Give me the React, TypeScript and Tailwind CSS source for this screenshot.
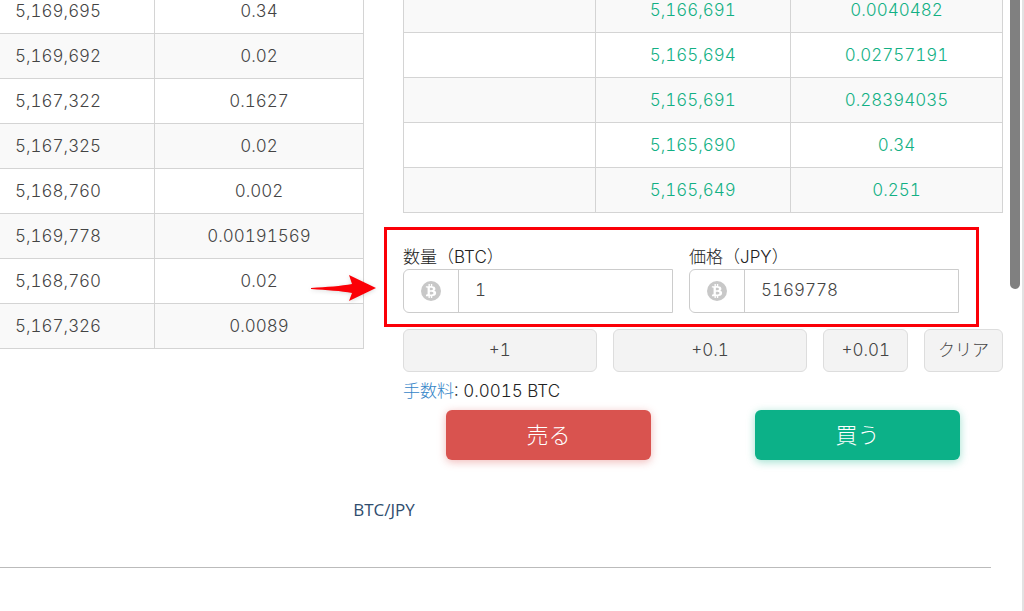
import React, { useState } from "react";
import clsx from "clsx";
import { FaBtc } from "react-icons/fa";

const trades = [
  { price: "5,169,695", amount: "0.34" },
  { price: "5,169,692", amount: "0.02" },
  { price: "5,167,322", amount: "0.1627" },
  { price: "5,167,325", amount: "0.02" },
  { price: "5,168,760", amount: "0.002" },
  { price: "5,169,778", amount: "0.00191569" },
  { price: "5,168,760", amount: "0.02" },
  { price: "5,167,326", amount: "0.0089" },
];

const bids = [
  { price: "5,166,691", amount: "0.0040482" },
  { price: "5,165,694", amount: "0.02757191" },
  { price: "5,165,691", amount: "0.28394035" },
  { price: "5,165,690", amount: "0.34" },
  { price: "5,165,649", amount: "0.251" },
];

const cell = "h-[45px] pt-0.5 border-[#d4d4d4]";

function TradeTable() {
  return (
    <table className="-mt-3 w-full table-fixed border-collapse text-[#444]">
      <colgroup>
        <col className="w-[42.5%]" />
        <col />
      </colgroup>
      <tbody>
        {trades.map((t, i) => (
          <tr key={i} className={i % 2 ? "bg-[#f9f9f9]" : "bg-white"}>
            <td className={clsx(cell, "border-y border-r pl-[15px]")}>{t.price}</td>
            <td className={clsx(cell, "border text-center")}>{t.amount}</td>
          </tr>
        ))}
      </tbody>
    </table>
  );
}

function BidTable() {
  return (
    <table className="-mt-[13px] w-full table-fixed border-collapse text-center text-[#12b084]">
      <colgroup>
        <col className="w-[32%]" />
        <col className="w-[32.6%]" />
        <col />
      </colgroup>
      <tbody>
        {bids.map((b, i) => (
          <tr key={i} className={i % 2 ? "bg-white" : "bg-[#f9f9f9]"}>
            <td className={clsx(cell, "border")} />
            <td className={clsx(cell, "border")}>{b.price}</td>
            <td className={clsx(cell, "border")}>{b.amount}</td>
          </tr>
        ))}
      </tbody>
    </table>
  );
}

interface FieldProps {
  id: string;
  label: string;
  value: string;
  onChange: (value: string) => void;
}

function Field({ id, label, value, onChange }: FieldProps) {
  return (
    <div className="min-w-0 flex-1">
      <label htmlFor={id} className="block leading-6 text-[#222]">
        {label}
      </label>
      <div className="flex h-11 rounded-l-md border border-[#ccc]">
        <span className="flex w-[55px] shrink-0 items-center justify-center border-r border-[#ccc]">
          <span className="flex size-5 items-center justify-center rounded-full bg-[#c8c8c8]">
            <FaBtc className="size-3.5 text-white" />
          </span>
        </span>
        <input
          id={id}
          value={value}
          onChange={(e) => onChange(e.target.value)}
          className="w-full min-w-0 px-4 text-[#444] outline-none"
        />
      </div>
    </div>
  );
}

const stepButton = "h-[43px] rounded-md border border-[#ddd] bg-[#f3f3f3] text-[#444] cursor-pointer";
const orderButton = "h-[50px] flex-1 rounded-md text-[22px] text-white cursor-pointer";

export default function App() {
  const [amount, setAmount] = useState("1");
  const [price, setPrice] = useState("5169778");

  const add = (step: number) => setAmount(String(Number((Number(amount) + step).toFixed(2))));

  return (
    <div className="flex min-h-screen overflow-hidden border-r-2 border-[#e2e2e2] bg-white font-['Inter','Noto_Sans_CJK_JP',sans-serif] text-[17px] font-light tabular-nums">
      <main className="min-w-0 flex-1">
        <div className="grid grid-cols-[364fr_600fr] gap-x-[39px]">
          <section>
            <TradeTable />
          </section>

          <section>
            <BidTable />

            <div className="relative mt-8 mr-11 flex gap-4">
              <Field id="amount" label="数量（BTC）" value={amount} onChange={setAmount} />
              <Field id="price" label="価格（JPY）" value={price} onChange={setPrice} />

              {/* Highlight frame and arrow */}
              <div className="pointer-events-none absolute -top-[18px] -right-5 -bottom-[14px] -left-[19px] border-3 border-[#fb0007]" />
              <svg className="pointer-events-none absolute top-7 -left-[94px] h-8 w-[70px] drop-shadow-sm" viewBox="0 0 70 32">
                <path d="M2 15 C18 14 32 13 43 11 L40 2 L67 15 L40 28 L43 20 C32 18 18 17 2 16 Z" fill="#fb0007" />
              </svg>
            </div>

            <div className="mt-4 grid grid-cols-[194fr_195fr_85fr_79fr] gap-4">
              <button className={stepButton} onClick={() => add(1)}>+1</button>
              <button className={stepButton} onClick={() => add(0.1)}>+0.1</button>
              <button className={stepButton} onClick={() => add(0.01)}>+0.01</button>
              <button className={stepButton} onClick={() => setAmount("")}>クリア</button>
            </div>

            <p className="mt-[7px] leading-6 text-[#222]">
              <a href="#fee" className="text-[#3585c8]">手数料</a>: 0.0015 BTC
            </p>

            <div className="mt-[7px] flex gap-[104px] px-[43px]">
              <button className={clsx(orderButton, "bg-[#d9534f] shadow-[0_2px_8px_rgba(217,83,79,0.4)]")}>売る</button>
              <button className={clsx(orderButton, "bg-[#0cb188] shadow-[0_2px_8px_rgba(12,177,136,0.4)]")}>買う</button>
            </div>
          </section>
        </div>

        <div className="mr-3 border-b border-[#bbb] pt-[38px] pb-[45px]">
          <h2 className="w-[77.5%] text-center font-['Open_Sans',sans-serif] leading-6 font-normal text-[#2f4d6e]">BTC/JPY</h2>
        </div>
      </main>

      {/* Scroll thumb */}
      <div className="mr-0.5 ml-[7px] h-[289px] w-2.5 rounded-b-full bg-[#808080]" />
    </div>
  );
}
